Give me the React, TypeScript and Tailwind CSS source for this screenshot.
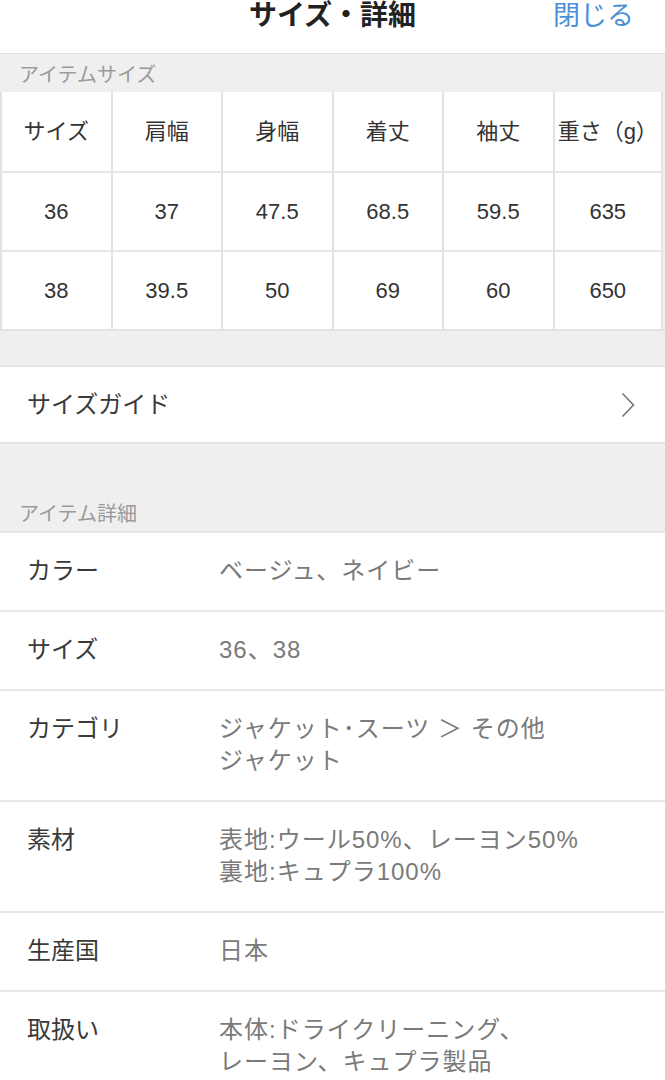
const font = {
  fontFamily: '"Liberation Sans", "Noto Sans CJK JP", sans-serif',
};

const headers = ["サイズ", "肩幅", "身幅", "着丈", "袖丈", "重さ（g）"];
const rows = [
  ["36", "37", "47.5", "68.5", "59.5", "635"],
  ["38", "39.5", "50", "69", "60", "650"],
];

const details: { label: string; value: string[] }[] = [
  { label: "カラー", value: ["ベージュ、ネイビー"] },
  { label: "サイズ", value: ["36、38"] },
  { label: "カテゴリ", value: ["ジャケット･スーツ ＞ その他", "ジャケット"] },
  { label: "素材", value: ["表地:ウール50%、レーヨン50%", "裏地:キュプラ100%"] },
  { label: "生産国", value: ["日本"] },
  { label: "取扱い", value: ["本体:ドライクリーニング、", "レーヨン、キュプラ製品"] },
];

function Cell({ children, last }: { children: React.ReactNode; last?: boolean }) {
  return (
    <div
      className={
        "flex items-center justify-center h-full text-[22px] text-[#333] border-l-2 border-[#e3e3e3] " +
        (last ? "border-r-2" : "")
      }
    >
      {children}
    </div>
  );
}

export default function App() {
  return (
    <div className="w-[665px] h-[1080px] overflow-hidden bg-[#efefef]" style={font}>
      {/* header */}
      <div className="relative h-[54px] bg-white border-b border-[#e2e2e2]">
        <div className="text-center text-[28px] leading-[32px] font-bold text-[#222]">サイズ・詳細</div>
        <div className="absolute right-[31px] top-0 text-[27px] leading-[32px] text-[#4a90d9]">閉じる</div>
      </div>

      {/* item size */}
      <div className="h-[38px] pl-[19px] pt-[4px] flex items-center text-[20px] text-[#9a9a9a]">
        アイテムサイズ
      </div>
      <div className="w-[663px] bg-white">
        <div className="grid grid-cols-6 h-[79px]">
          {headers.map((h, i) => (
            <Cell key={h} last={i === 5}>
              {h}
            </Cell>
          ))}
        </div>
        {rows.map((r, ri) => (
          <div key={ri} className="grid grid-cols-6 h-[79px] border-t-2 border-[#e6e6e6]">
            {r.map((v, i) => (
              <Cell key={i} last={i === 5}>
                {v}
              </Cell>
            ))}
          </div>
        ))}
      </div>

      <div className="h-[36px] border-t-2 border-[#e3e3e3]" />

      {/* size guide */}
      <div className="h-[77px] bg-white border-t-2 border-[#e6e6e6] flex items-center justify-between pl-[27px] pr-[30px]">
        <span className="text-[24px] text-[#3a3a3a]">サイズガイド</span>
        <svg width="14" height="26" viewBox="0 0 14 26" fill="none">
          <polyline points="1.5,1.5 12.5,13 1.5,24.5" stroke="#777" strokeWidth="1.6" />
        </svg>
      </div>

      <div className="h-[89px] border-t-2 border-[#e3e3e3] flex items-end pl-[19px] pb-[2px] text-[20px] text-[#9a9a9a]">
        アイテム詳細
      </div>

      {/* details */}
      <div className="bg-white">
        {details.map((d) => (
          <div
            key={d.label}
            className="flex pt-[22px] pb-[23px] border-t-2 border-[#e8e8e8] text-[24px] leading-[32px]"
          >
            <div className="w-[219px] pl-[27px] text-[#3a3a3a] shrink-0">{d.label}</div>
            <div className="text-[#7a7a7a] tracking-[1px]">
              {d.value.map((v) => (
                <div key={v}>{v}</div>
              ))}
            </div>
          </div>
        ))}
      </div>
    </div>
  );
}
